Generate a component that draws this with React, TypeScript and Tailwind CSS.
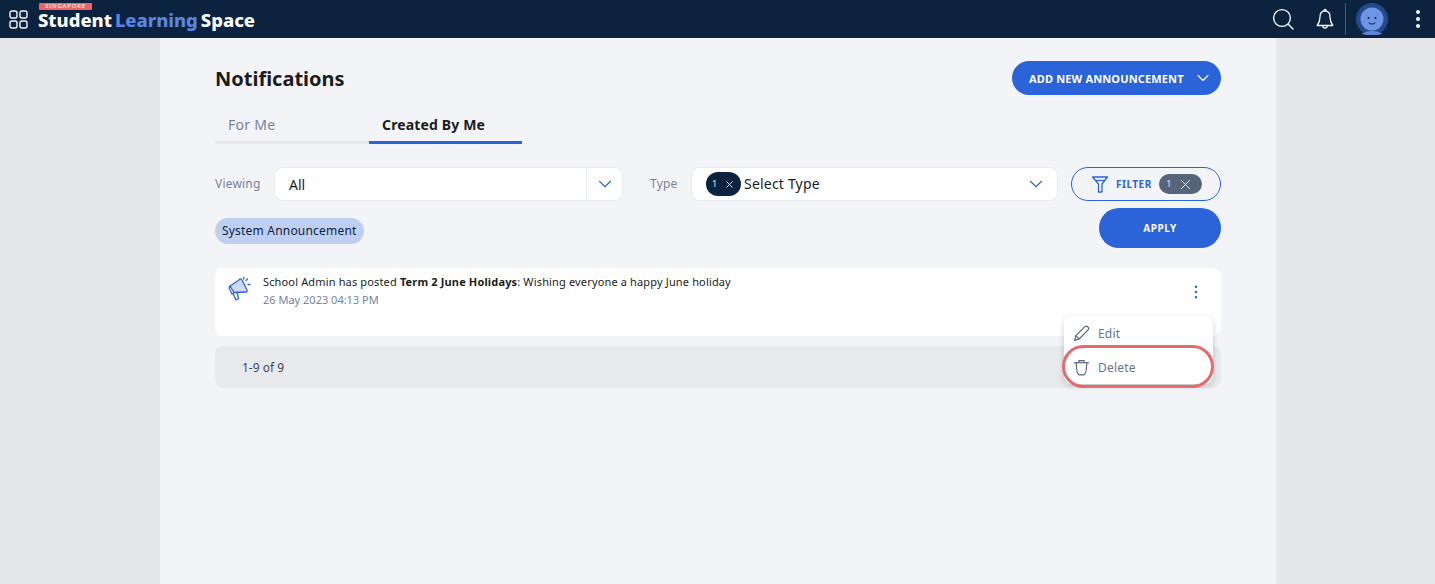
import { ChevronDown, EllipsisVertical, X } from 'lucide-react'

const TopBar = () => (
  <header className="h-[38px] bg-[#0c2340] flex items-center pl-[9px] pr-[14px]">
    <svg width="19" height="19" viewBox="0 0 19 19" fill="none" stroke="#f3f4f8" strokeWidth="1.4">
      <rect x="1" y="1" width="7" height="7" rx="2" />
      <rect x="11" y="1" width="7" height="7" rx="2" />
      <rect x="1" y="11" width="7" height="7" rx="2" />
      <rect x="11" y="11" width="7" height="7" rx="2" />
    </svg>

    {/* LOGO */}
    <div className="relative ml-[10px] h-full w-[225px]">
      <span className="absolute left-[1px] top-[3px] h-[7px] w-[53px] rounded-[1px] bg-[#e8636b] text-white text-[6px] leading-[7px] tracking-[0.8px] text-center">
        SINGAPORE
      </span>
      <div className="absolute left-0 top-[10px] text-[18.4px] leading-[20px] font-extrabold whitespace-nowrap text-white">
        Student<span className="text-[#5b86e0] ml-[3px]">Learning</span>
        <span className="ml-[3px]">Space</span>
      </div>
    </div>

    <div className="ml-auto flex items-center">
      <svg width="22" height="22" viewBox="0 0 22 22" fill="none" stroke="#f3f4f8" strokeWidth="1.4" strokeLinecap="round">
        <circle cx="10" cy="10" r="8.4" />
        <path d="M16.5 16.5 L21 21" />
      </svg>
      <svg className="ml-[22px]" width="18" height="22" viewBox="0 0 18 22" fill="none" stroke="#f3f4f8" strokeWidth="1.3" strokeLinejoin="round">
        <path d="M9 3 C5 3 4 6 4 9 C4 13 3 15 1.2 17.5 H16.8 C15 15 14 13 14 9 C14 6 13 3 9 3 Z" />
        <path d="M7.8 3 C7.8 1 10.2 1 10.2 3" />
        <path d="M6.8 17.5 C6.8 21 11.2 21 11.2 17.5" />
      </svg>
      <div className="ml-[11px] h-[32px] w-px bg-[#4a5a72]" />
      <svg className="ml-[10px]" width="32" height="32" viewBox="0 0 32 32">
        <circle cx="16" cy="16" r="16" fill="#234a8c" />
        <path d="M6 31 C9 27 23 27 26 31 C23 32.5 9 32.5 6 31 Z" fill="#5f86dc" />
        <circle cx="16" cy="16" r="11.5" fill="#6f95e6" />
        <circle cx="12.5" cy="15" r="1" fill="#0c2340" />
        <circle cx="19.5" cy="15" r="1" fill="#0c2340" />
        <path d="M13 20 C14.5 21.5 17.5 21.5 19 20" fill="none" stroke="#0c2340" strokeWidth="1" strokeLinecap="round" />
      </svg>
      <svg className="ml-[27px]" width="6" height="20" viewBox="0 0 6 20" fill="#f3f4f8">
        <circle cx="3" cy="3" r="2" />
        <circle cx="3" cy="10" r="2" />
        <circle cx="3" cy="17" r="2" />
      </svg>
    </div>
  </header>
)

const ActionsMenu = () => (
  <div className="absolute right-[8px] top-[48px] w-[149px] h-[68px] bg-white rounded-lg shadow-[0_2px_6px_rgba(0,0,0,0.18)] text-[12px] text-[#68758a] tracking-[0.2px]">
    <div className="h-[34px] pt-px flex items-center pl-[9px] gap-[8px]">
      <svg width="17" height="17" viewBox="0 0 16 16" fill="none" stroke="#56637a" strokeWidth="1.1" strokeLinejoin="round">
        <path d="M1.5 14.5 L2.6 10 L11 1.8 C12 1 13.2 1 14 1.9 C14.9 2.8 14.9 4 14 4.9 L5.8 13.2 Z" />
        <path d="M2.6 10 L5.8 13.2" />
      </svg>
      Edit
    </div>
    <div className="h-[34px] pt-px flex items-center pl-[9px] gap-[8px]">
      <svg width="17" height="17" viewBox="0 0 16 16" fill="none" stroke="#56637a" strokeWidth="1.1" strokeLinejoin="round">
        <path d="M1 3.5 H15" />
        <path d="M5.5 3.5 V1.5 H10.5 V3.5" />
        <path d="M3 3.5 C3.5 8 3 15 6 15 H10 C13 15 12.5 8 13 3.5" />
      </svg>
      Delete
    </div>
    {/* callout round the delete row */}
    <div className="absolute -left-[2px] -right-[1px] top-[29px] h-[43px] rounded-[22px] border-[3px] border-[#e66a6c]" />
  </div>
)

export default function App() {
  return (
    <div className="h-screen overflow-hidden bg-[#e6e7eb] font-['Noto_Sans',sans-serif]">
      <TopBar />
      <main className="ml-[160px] w-[1116px] h-[546px] bg-[#f3f4f8] px-[55px] pt-[23px]">
        <div className="flex items-center justify-between h-[34px]">
          <h1 className="text-[20px] font-bold text-[#1c1c1c] pt-[2px]">Notifications</h1>
          <button className="w-[209px] h-[34px] rounded-full bg-[#2b63d9] text-white text-[11px] font-bold tracking-[0.15px] flex items-center pl-[17px] gap-[9px]">
            <span className="pt-[2px]">ADD NEW ANNOUNCEMENT</span>
            <ChevronDown size={20} strokeWidth={1.4} />
          </button>
        </div>

        {/* TABS */}
        <div className="flex mt-[10px] w-[307px] text-[14px]">
          <div className="w-[154px] h-[39px] pl-[13px] pt-[9px] text-[#76849a] border-b-[3px] border-[#e6e7eb] tracking-[0.3px]">For Me</div>
          <div className="w-[153px] h-[39px] pl-[13px] pt-[9px] font-bold text-[#1c1c1c] border-b-[3px] border-[#2b63d9] tracking-[0.15px]">Created By Me</div>
        </div>

        {/* FILTERS */}
        <div className="flex items-center mt-[23px] h-[34px]">
          <span className="w-[59px] text-[12px] text-[#76849a] tracking-[0.2px]">Viewing</span>
          <div className="w-[349px] h-[34px] bg-white rounded-lg border border-[#e8e9ed] flex items-center">
            <span className="flex-1 pl-[14px] text-[14px] text-[#1c1c1c]">All</span>
            <div className="w-[36px] h-full border-l border-[#eeeff2] flex items-center justify-center text-[#2b63d9]">
              <ChevronDown size={22} strokeWidth={1.2} />
            </div>
          </div>
          <span className="ml-[27px] w-[41px] text-[12px] text-[#76849a] tracking-[0.2px]">Type</span>
          <div className="w-[367px] h-[34px] bg-white rounded-lg border border-[#e8e9ed] flex items-center pl-[14px] pr-[10px]">
            <span className="w-[35px] h-[24px] rounded-full bg-[#0c2340] text-[#e6e7eb] text-[9px] flex items-center justify-center gap-[7px]">
              1 <X size={11} />
            </span>
            <span className="ml-[3px] -mt-[2px] text-[14px] text-[#1c1c1c] tracking-[0.2px]">Select Type</span>
            <ChevronDown className="ml-auto text-[#2b63d9]" size={22} strokeWidth={1.2} />
          </div>
          <button className="ml-[13px] w-[150px] h-[34px] rounded-full border border-[#2b63d9] flex items-center pl-[19px]">
            <svg width="18" height="18" viewBox="0 0 18 18" fill="none" stroke="#2b63d9" strokeWidth="1.3" strokeLinejoin="round">
              <path d="M1.5 2 H16.5 L11 9 V17 H7.5 V9 Z" />
              <path d="M4 5.5 H14" />
            </svg>
            <span className="ml-[7px] text-[10px] font-bold text-[#2b63d9] tracking-[0.5px]">FILTER</span>
            <span className="ml-[7px] w-[43px] h-[20px] rounded-full bg-[#56657a] text-[#e6e7eb] text-[9px] flex items-center justify-center gap-[6px]">
              1 <X size={17} strokeWidth={1.4} />
            </span>
          </button>
        </div>

        <div className="flex items-start justify-between mt-[7px] h-[40px]">
          <span className="mt-[10px] h-[26px] px-[7px] rounded-full bg-[#bfcff2] text-[#0c2340] text-[12px] tracking-[0.2px] flex items-center">System Announcement</span>
          <button className="w-[122px] h-[40px] rounded-full bg-[#2b63d9] text-white text-[10px] font-bold tracking-[0.5px]">APPLY</button>
        </div>

        {/* NOTIFICATION */}
        <div className="relative mt-[20px] h-[68px] bg-white rounded-lg flex items-start pl-[13px] pt-[6px] z-10">
          <svg className="mt-[2px]" width="24" height="26" viewBox="0 0 24 26" fill="none" stroke="#2b63d9" strokeWidth="1.3" strokeLinejoin="round" strokeLinecap="round">
            <path d="M11 4 C12 2.5 13 2.5 14 4 L19 14 C19.5 16 18.5 16.5 17 16 L6 16.5 L2 10 Z" fill="#cddaf6" />
            <path d="M2 10 L1 12 L4 18 L6.5 16.5" />
            <path d="M5 17.5 L8 24 L10.5 22.5 L9 16.5" />
            <path d="M18 4.5 L19.5 3 M20 8.5 H22 M15.5 3 L16 1.5" />
          </svg>
          <div className="ml-[11px]">
            <p className="text-[11px] leading-[15px] text-[#1c1c1c] tracking-[0.15px]">
              School Admin has posted <strong className="font-bold">Term 2 June Holidays</strong>: Wishing everyone a happy June holiday
            </p>
            <p className="mt-[3px] text-[11px] leading-[15px] text-[#76849a]">26 May 2023 04:13 PM</p>
          </div>
          <EllipsisVertical className="absolute right-[16px] top-[15px] text-[#2b63d9]" size={18} strokeWidth={1.5} />
          <ActionsMenu />
        </div>

        {/* PAGINATION */}
        <div className="mt-[10px] h-[42px] pt-[2px] rounded-lg bg-[#e8e9ed] flex items-center pl-[27px] text-[12px] text-[#3c4757]">1-9 of 9</div>
      </main>
    </div>
  )
}
